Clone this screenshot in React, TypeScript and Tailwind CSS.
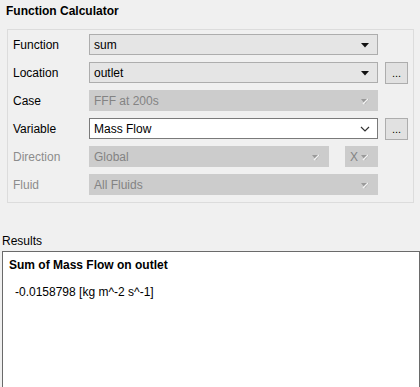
import React from 'react';

const font = { fontFamily: '"Liberation Sans", Arial, sans-serif' };

function Arrow({ disabled }: { disabled?: boolean }) {
  if (disabled) {
    return (
      <svg width="10" height="8" viewBox="0 0 10 8">
        <path d="M1 2 L9 2 L5 7 Z" fill="#9a9a9a" />
        <path d="M3 7 L8 2" stroke="#f4f4f4" strokeWidth="1.5" />
      </svg>
    );
  }
  return (
    <svg width="10" height="6" viewBox="0 0 10 6">
      <path d="M1 1 L9 1 L5 5.5 Z" fill="#111" />
    </svg>
  );
}

function Combo({
  value,
  kind,
  className = '',
}: {
  value: string;
  kind: 'enabled' | 'disabled' | 'edit';
  className?: string;
}) {
  const box =
    kind === 'edit'
      ? 'bg-white border-[#7a7a7a] text-black'
      : kind === 'disabled'
        ? 'bg-[#cccccc] border-[#cccccc] text-[#838383]'
        : 'bg-[#e5e5e5] border-[#adadad] text-black';
  return (
    <div className={`h-[21px] border flex items-center justify-between pl-[4px] pr-[7px] ${box} ${className}`}>
      <span className="text-[12px] leading-none">{value}</span>
      {kind === 'edit' ? (
        <svg width="10" height="6" viewBox="0 0 10 6">
          <path d="M1 1 L5 5 L9 1" stroke="#333" strokeWidth="1.2" fill="none" />
        </svg>
      ) : (
        <Arrow disabled={kind === 'disabled'} />
      )}
    </div>
  );
}

function DotsButton() {
  return (
    <div className="w-[23px] h-[22px] bg-[#e1e1e1] border border-[#adadad] flex items-end justify-center pb-[4px] text-[11px] leading-none text-black">
      ...
    </div>
  );
}

const rows: {
  label: string;
  value: string;
  kind: 'enabled' | 'disabled' | 'edit';
  dots?: boolean;
  dimLabel?: boolean;
  axis?: boolean;
}[] = [
  { label: 'Function', value: 'sum', kind: 'enabled' },
  { label: 'Location', value: 'outlet', kind: 'enabled', dots: true },
  { label: 'Case', value: 'FFF at 200s', kind: 'disabled' },
  { label: 'Variable', value: 'Mass Flow', kind: 'edit', dots: true },
  { label: 'Direction', value: 'Global', kind: 'disabled', dimLabel: true, axis: true },
  { label: 'Fluid', value: 'All Fluids', kind: 'disabled', dimLabel: true },
];

export default function App() {
  return (
    <div className="w-[420px] h-[387px] bg-[#f0f0f0] overflow-hidden flex flex-col" style={font}>
      <div className="pl-[6px] pt-[2px] h-[29px] text-[12px] font-bold text-black">Function Calculator</div>

      <div className="mx-[7px] w-[407px] border border-[#dcdcdc] pt-[4px] pb-[7px] pl-[5px] flex flex-col gap-[7px]">
        {rows.map(r => (
          <div key={r.label} className="flex items-center h-[21px]">
            <span className={`w-[76px] text-[12px] ${r.dimLabel ? 'text-[#8c8c8c]' : 'text-black'}`}>{r.label}</span>
            {r.axis ? (
              <div className="flex w-[289px]">
                <Combo value={r.value} kind={r.kind} className="w-[240px]" />
                <Combo value="X" kind="disabled" className="w-[33px] ml-[16px] pr-[6px]" />
              </div>
            ) : (
              <Combo value={r.value} kind={r.kind} className="w-[289px]" />
            )}
            {r.dots && (
              <div className="ml-[7px]">
                <DotsButton />
              </div>
            )}
          </div>
        ))}
      </div>

      <div className="pl-[2px] mt-[29px] h-[19px] text-[12px] text-black">Results</div>
      <div className="ml-[2px] flex-1 bg-white border-t border-x border-[#6a6a6a]">
        <div className="pl-[6px] pt-[4px] text-[12px] font-bold text-black">Sum of Mass Flow on outlet</div>
        <div className="pl-[12px] pt-[9px] text-[12px] text-black">-0.0158798 [kg m^-2 s^-1]</div>
      </div>
    </div>
  );
}
